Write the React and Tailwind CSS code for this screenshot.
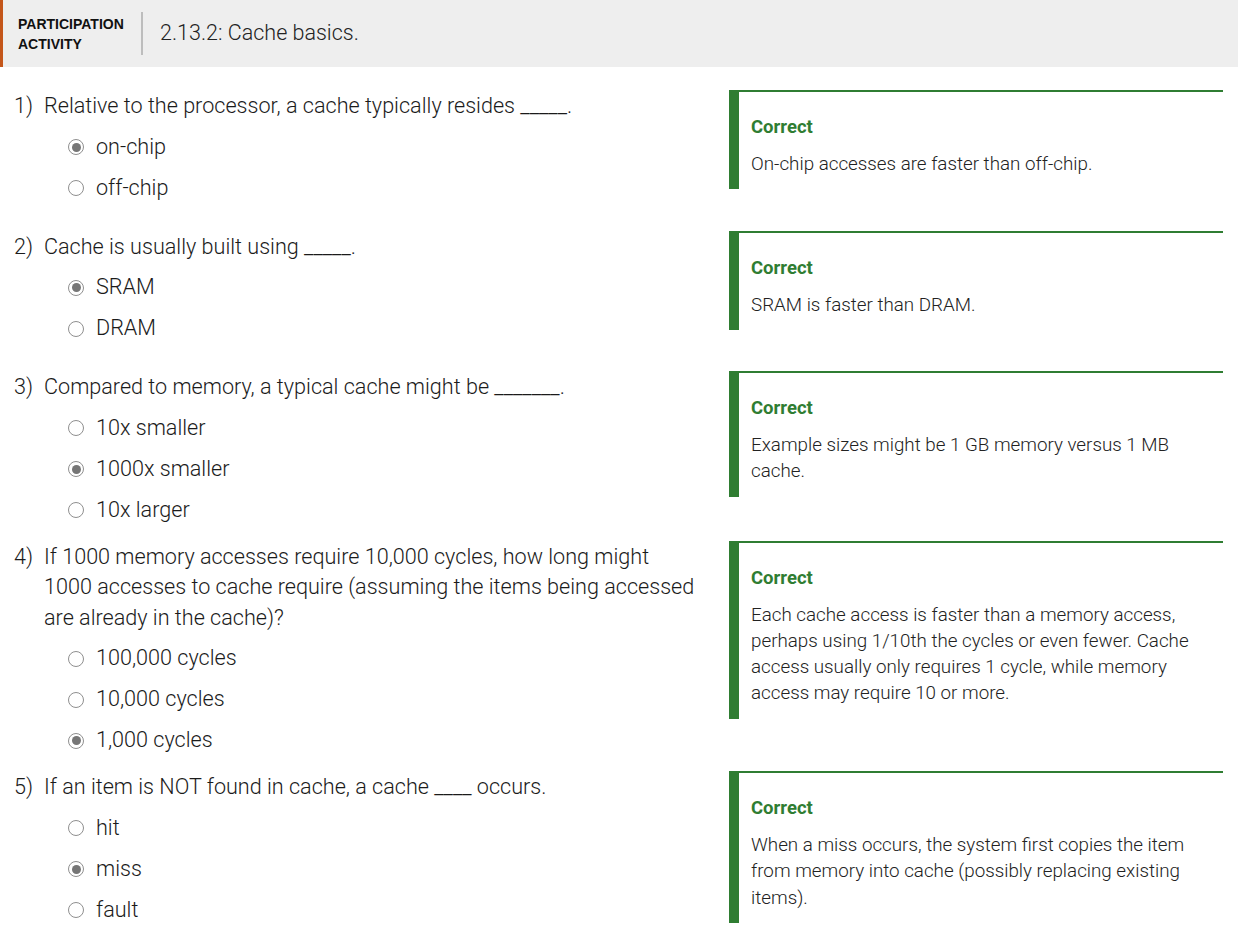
import React from "react";

const questions = [
  {
    n: "1)",
    text: ["Relative to the processor, a cache typically resides _____."],
    options: ["on-chip", "off-chip"],
    sel: 0,
    fb: ["On-chip accesses are faster than off-chip."],
  },
  {
    n: "2)",
    text: ["Cache is usually built using _____."],
    options: ["SRAM", "DRAM"],
    sel: 0,
    fb: ["SRAM is faster than DRAM."],
  },
  {
    n: "3)",
    text: ["Compared to memory, a typical cache might be _______."],
    options: ["10x smaller", "1000x smaller", "10x larger"],
    sel: 1,
    fb: ["Example sizes might be 1 GB memory versus 1 MB", "cache."],
  },
  {
    n: "4)",
    text: [
      "If 1000 memory accesses require 10,000 cycles, how long might",
      "1000 accesses to cache require (assuming the items being accessed",
      "are already in the cache)?",
    ],
    options: ["100,000 cycles", "10,000 cycles", "1,000 cycles"],
    sel: 2,
    fb: [
      "Each cache access is faster than a memory access,",
      "perhaps using 1/10th the cycles or even fewer. Cache",
      "access usually only requires 1 cycle, while memory",
      "access may require 10 or more.",
    ],
  },
  {
    n: "5)",
    text: ["If an item is NOT found in cache, a cache ____ occurs."],
    options: ["hit", "miss", "fault"],
    sel: 1,
    fb: [
      "When a miss occurs, the system first copies the item",
      "from memory into cache (possibly replacing existing",
      "items).",
    ],
  },
];

function Radio({ checked }) {
  return (
    <span className="flex h-[16px] w-[16px] shrink-0 items-center justify-center rounded-full border border-[#8f8f8f] bg-white">
      {checked && <span className="h-[9px] w-[9px] rounded-full bg-[#767676]" />}
    </span>
  );
}

function Lines({ lines }) {
  return lines.map((l, k) => (
    <React.Fragment key={k}>
      {k > 0 && <br />}
      {l}
    </React.Fragment>
  ));
}

export default function App() {
  return (
    <div className="min-h-[933px] w-[1238px] bg-white font-['Roboto',sans-serif] text-[#1b1b1b]">
      <div className="flex h-[67px] items-center border-l-[3px] border-[#c4561a] bg-[#eeeeee]">
        <div className="w-[138px] pl-[15px] font-['Liberation_Sans',Arial,sans-serif] text-[14px] font-bold leading-[20px] text-[#111]">
          PARTICIPATION
          <br />
          ACTIVITY
        </div>
        <div className="h-[43px] w-[2px] bg-[#bdbdbd]" />
        <div className="pl-[17px] text-[21.5px] font-light text-[#222]">2.13.2: Cache basics.</div>
      </div>

      <div className="pt-[24px]">
        {questions.map((q, i) => (
          <div key={i} className="flex min-h-[140.5px]">
            <div className="w-[729px] pb-[11px] pl-[14px] font-light">
              <div className="flex text-[21.6px] leading-[30.5px]">
                <span className="w-[30px] shrink-0">{q.n}</span>
                <span className="whitespace-nowrap">
                  <Lines lines={q.text} />
                </span>
              </div>
              <div className="mt-[5px] pl-[54px]">
                {q.options.map((o, j) => (
                  <div key={j} className="flex h-[41px] items-center gap-[12px] text-[21.6px]">
                    <Radio checked={j === q.sel} />
                    <span>{o}</span>
                  </div>
                ))}
              </div>
            </div>
            <div className="-mt-px w-[494px]">
              <div className="border-l-[10px] border-t-2 border-[#2f7d32] pb-[12px] pl-[12px] pr-[16px] pt-[22px]">
                <div className="text-[18.5px] font-bold leading-[26px] text-[#2f7d32]">Correct</div>
                <div className="mt-[11px] whitespace-nowrap text-[18.8px] font-light leading-[26.3px] text-[#222]">
                  <Lines lines={q.fb} />
                </div>
              </div>
            </div>
          </div>
        ))}
      </div>
    </div>
  );
}
